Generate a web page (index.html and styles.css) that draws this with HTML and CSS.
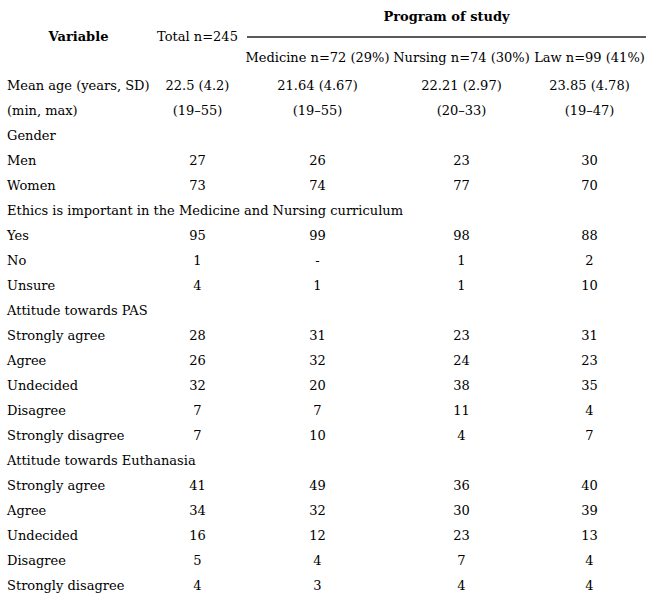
FILE: index.html
```html
<!DOCTYPE html>
<html>
<head>
<meta charset="utf-8">
<link rel="stylesheet" href="styles.css">
</head>
<body>
<table class="stats">
  <colgroup>
    <col class="c-var"><col class="c-total"><col class="c-med"><col class="c-nur"><col class="c-law">
  </colgroup>
  <thead>
    <tr class="h1">
      <th rowspan="2" class="hvar">Variable</th>
      <th rowspan="2" class="htotal">Total n=245</th>
      <th colspan="3" class="hprog"><div class="prog">Program of study</div></th>
    </tr>
    <tr class="h2">
      <th class="hsub">Medicine n=72 (29%)</th>
      <th class="hsub">Nursing n=74 (30%)</th>
      <th class="hsub">Law n=99 (41%)</th>
    </tr>
  </thead>
  <tbody>
    <tr><td>Mean age (years, SD)</td><td>22.5 (4.2)</td><td>21.64 (4.67)</td><td>22.21 (2.97)</td><td>23.85 (4.78)</td></tr>
    <tr><td>(min, max)</td><td>(19–55)</td><td>(19–55)</td><td>(20–33)</td><td>(19–47)</td></tr>
    <tr><td colspan="5">Gender</td></tr>
    <tr><td>Men</td><td>27</td><td>26</td><td>23</td><td>30</td></tr>
    <tr><td>Women</td><td>73</td><td>74</td><td>77</td><td>70</td></tr>
    <tr><td colspan="5">Ethics is important in the Medicine and Nursing curriculum</td></tr>
    <tr><td>Yes</td><td>95</td><td>99</td><td>98</td><td>88</td></tr>
    <tr><td>No</td><td>1</td><td>-</td><td>1</td><td>2</td></tr>
    <tr><td>Unsure</td><td>4</td><td>1</td><td>1</td><td>10</td></tr>
    <tr><td colspan="5">Attitude towards PAS</td></tr>
    <tr><td>Strongly agree</td><td>28</td><td>31</td><td>23</td><td>31</td></tr>
    <tr><td>Agree</td><td>26</td><td>32</td><td>24</td><td>23</td></tr>
    <tr><td>Undecided</td><td>32</td><td>20</td><td>38</td><td>35</td></tr>
    <tr><td>Disagree</td><td>7</td><td>7</td><td>11</td><td>4</td></tr>
    <tr><td>Strongly disagree</td><td>7</td><td>10</td><td>4</td><td>7</td></tr>
    <tr><td colspan="5">Attitude towards Euthanasia</td></tr>
    <tr><td>Strongly agree</td><td>41</td><td>49</td><td>36</td><td>40</td></tr>
    <tr><td>Agree</td><td>34</td><td>32</td><td>30</td><td>39</td></tr>
    <tr><td>Undecided</td><td>16</td><td>12</td><td>23</td><td>13</td></tr>
    <tr><td>Disagree</td><td>5</td><td>4</td><td>7</td><td>4</td></tr>
    <tr><td>Strongly disagree</td><td>4</td><td>3</td><td>4</td><td>4</td></tr>
  </tbody>
</table>
</body>
</html>
```
FILE: styles.css
```css
html, body {
  margin: 0;
  padding: 0;
  background: #fff;
}
body {
  padding: 0 8px 0 7px;
  font-family: "DejaVu Serif", serif;
  font-size: 13px;
  color: #000;
}
.stats {
  border-collapse: collapse;
  table-layout: fixed;
  width: 639px;
}
.c-var { width: 143px; }
.c-total { width: 95px; }
.c-med { width: 145px; }
.c-nur { width: 143px; }
.c-law { width: 113px; }
.stats th, .stats td {
  padding: 0;
  white-space: nowrap;
  font-weight: normal;
}
.stats td {
  height: 25px;
  line-height: 25px;
  text-align: center;
}
.stats td:first-child {
  text-align: left;
}
.stats .h1 th {
  height: 38px;
}
.stats .hvar, .stats .htotal {
  vertical-align: middle;
  text-align: center;
}
.stats .hvar {
  font-weight: bold;
}
.stats .hprog {
  padding: 0;
  vertical-align: top;
}
.prog {
  margin-left: 2px;
  height: 36px;
  line-height: 34px;
  font-weight: bold;
  border-bottom: 2px solid #5a5a5a;
}
.stats .hsub {
  padding: 7px 0 3px;
  line-height: 25px;
  text-align: center;
}
```
